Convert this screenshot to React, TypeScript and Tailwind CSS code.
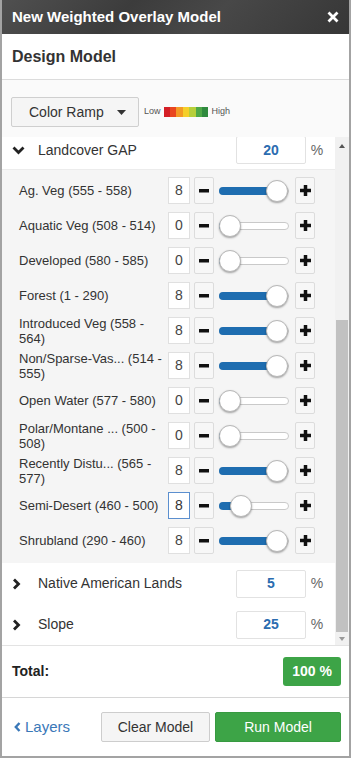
import { useState } from 'react';

type Item = {
  label: string;
  value: number;
  pos: number;
  focused?: boolean;
};

const items: Item[] = [
  { label: 'Ag. Veg (555 - 558)', value: 8, pos: 47 },
  { label: 'Aquatic Veg (508 - 514)', value: 0, pos: 0 },
  { label: 'Developed (580 - 585)', value: 0, pos: 0 },
  { label: 'Forest (1 - 290)', value: 8, pos: 47 },
  { label: 'Introduced Veg (558 - 564)', value: 8, pos: 47 },
  { label: 'Non/Sparse-Vas... (514 - 555)', value: 8, pos: 47 },
  { label: 'Open Water (577 - 580)', value: 0, pos: 0 },
  { label: 'Polar/Montane ... (500 - 508)', value: 0, pos: 0 },
  { label: 'Recently Distu... (565 - 577)', value: 8, pos: 47 },
  { label: 'Semi-Desert (460 - 500)', value: 8, pos: 11, focused: true },
  { label: 'Shrubland (290 - 460)', value: 8, pos: 47 },
];

const ramp = ['#d41f26', '#e9461f', '#f39a25', '#f5cf2a', '#b7cf3a', '#4ea847', '#2f8a3e'];

function MinusIcon() {
  return (
    <svg width="10" height="4" viewBox="0 0 10 4">
      <rect x="0" y="0" width="10" height="3.5" fill="#111" />
    </svg>
  );
}

function PlusIcon() {
  return (
    <svg width="11" height="11" viewBox="0 0 11 11">
      <rect x="0" y="3.75" width="11" height="3.5" fill="#111" />
      <rect x="3.75" y="0" width="3.5" height="11" fill="#111" />
    </svg>
  );
}

function StepButton({ children }: { children: React.ReactNode }) {
  return (
    <button className="w-[20px] h-[27px] flex items-center justify-center bg-[#f7f7f7] border border-[#dcdcdc] rounded-[2px]">
      {children}
    </button>
  );
}

function Slider({ pos }: { pos: number }) {
  return (
    <div className="relative w-[70px] h-[22px]">
      <div className="absolute left-0 right-0 top-[7px] h-[8px] rounded-full bg-white border border-[#c9c9c9]" />
      <div
        className="absolute left-0 top-[7px] h-[8px] rounded-l-full bg-[#1e6db0]"
        style={{ width: pos + 6 }}
      />
      <div
        className="absolute top-0 w-[22px] h-[22px] rounded-full bg-white border border-[#b8b8b8] shadow-[0_1px_2px_rgba(0,0,0,0.35)]"
        style={{ left: pos }}
      />
    </div>
  );
}

function SubRow({ item }: { item: Item }) {
  return (
    <div className="h-[35px] flex items-center pl-[17px]">
      <div className="w-[149px] pr-[6px] text-[13px] leading-[15px] text-[#333]">{item.label}</div>
      <div
        className={
          item.focused
            ? 'w-[22px] h-[27px] flex items-center justify-center bg-white border border-[#5b8fcf] text-[14px] text-[#333]'
            : 'w-[22px] h-[27px] flex items-center justify-center bg-white border border-[#e0e0e0] text-[14px] text-[#444]'
        }
      >
        {item.value}
      </div>
      <div className="ml-[4px]">
        <StepButton>
          <MinusIcon />
        </StepButton>
      </div>
      <div className="ml-[5px]">
        <Slider pos={item.pos} />
      </div>
      <div className="ml-[6px]">
        <StepButton>
          <PlusIcon />
        </StepButton>
      </div>
    </div>
  );
}

function GroupRow({
  label,
  value,
  open,
  height,
}: {
  label: string;
  value: string;
  open?: boolean;
  height: string;
}) {
  return (
    <div className={`${height} flex items-center pl-[10px] pr-[7px] bg-white`}>
      <div className="w-[26px] flex items-center">
        {open ? (
          <svg width="13" height="9" viewBox="0 0 13 9">
            <polyline points="1.5,1.5 6.5,6.5 11.5,1.5" fill="none" stroke="#222" strokeWidth="2.8" />
          </svg>
        ) : (
          <svg width="9" height="12" viewBox="0 0 9 12">
            <polyline points="2,1.5 6.5,6 2,10.5" fill="none" stroke="#222" strokeWidth="2.8" />
          </svg>
        )}
      </div>
      <div className="text-[14px] text-[#333]">{label}</div>
      <div className="ml-auto w-[70px] h-[28px] flex items-center justify-center bg-white border border-[#e2e2e2] rounded-[2px] text-[14px] font-bold text-[#2b6cb0]">
        {value}
      </div>
      <div className="w-[22px] text-center text-[14px] text-[#666]">%</div>
    </div>
  );
}

export default function App() {
  const [rampOpen] = useState(false);
  return (
    <div className="w-[351px] h-[758px] flex flex-col border-x-2 border-b-2 border-[#a3a3a3] bg-white font-['Liberation_Sans',Arial,sans-serif] overflow-hidden">
      {/* title bar */}
      <div className="h-[34px] shrink-0 -mx-[2px] flex items-center justify-between px-[12px] bg-[linear-gradient(135deg,#505050_0%,#3c3c3c_35%,#484848_60%,#363636_100%)]">
        <span className="text-[15px] font-bold text-white">New Weighted Overlay Model</span>
        <svg width="12" height="12" viewBox="0 0 12 12">
          <path d="M1.5 1.5 L10.5 10.5 M10.5 1.5 L1.5 10.5" stroke="#fff" strokeWidth="2.8" />
        </svg>
      </div>

      {/* heading */}
      <div className="h-[46px] shrink-0 flex items-center px-[10px] border-b border-[#dcdcdc] bg-white">
        <span className="text-[16px] font-bold text-[#333]">Design Model</span>
      </div>

      {/* tools */}
      <div className="h-[57px] shrink-0 pt-[17px] px-[9px] bg-[#fafafa]">
        <div className="flex items-center">
          <button className="w-[128px] h-[30px] flex items-center justify-between pl-[17px] pr-[12px] bg-[#f5f5f5] border border-[#cfcfcf] rounded-[2px] text-[14px] text-[#333]">
            Color Ramp
            <svg width="9" height="5" viewBox="0 0 9 5" className={rampOpen ? 'rotate-180' : ''}>
              <polygon points="0,0 9,0 4.5,5" fill="#333" />
            </svg>
          </button>
          <div className="flex items-center ml-[5px] gap-[3px]">
            <span className="text-[9px] text-[#555]">Low</span>
            <div className="flex h-[10px] w-[45px]">
              {ramp.map((c) => (
                <div key={c} className="flex-1" style={{ background: c }} />
              ))}
            </div>
            <span className="text-[9px] text-[#555]">High</span>
          </div>
        </div>
      </div>

      {/* scroll panel */}
      <div className="h-[508px] shrink-0 flex">
        <div className="flex-1 overflow-hidden">
          <div className="-mt-[6px]">
            <GroupRow label="Landcover GAP" value="20" open height="h-[39px] border-b border-[#ececec]" />
            <div className="bg-[#f5f5f5] pt-[3px] pb-[5px]">
              {items.map((it) => (
                <SubRow key={it.label} item={it} />
              ))}
            </div>
            <GroupRow label="Native American Lands" value="5" height="h-[41px]" />
            <GroupRow label="Slope" value="25" height="h-[41px]" />
          </div>
        </div>
        <div className="w-[14px] flex flex-col bg-[#f1f1f1]">
          <div className="h-[17px] flex items-center justify-center">
            <svg width="6" height="4" viewBox="0 0 6 4">
              <polygon points="0,4 6,4 3,0" fill="#555" />
            </svg>
          </div>
          <div className="flex-1 flex flex-col px-[1px]">
            <div className="mt-[166px] h-[312px] bg-[#c1c1c1]" />
          </div>
          <div className="h-[13px] flex items-center justify-center">
            <svg width="6" height="4" viewBox="0 0 6 4">
              <polygon points="0,0 6,0 3,4" fill="#999" />
            </svg>
          </div>
        </div>
      </div>

      {/* total */}
      <div className="h-[52px] shrink-0 flex items-center justify-between pl-[10px] pr-[8px] border-t border-[#e3e3e3] bg-white">
        <span className="text-[14px] font-bold text-[#222]">Total:</span>
        <div className="w-[58px] h-[29px] flex items-center justify-center rounded-[3px] bg-[#3da447] text-[14px] font-bold text-white">
          100 %
        </div>
      </div>

      {/* footer */}
      <div className="h-[59px] shrink-0 flex items-center pl-[12px] pr-[8px] border-t border-[#d6d6d6] bg-white">
        <a className="flex items-center gap-[4px] text-[15px] text-[#3a78b8]">
          <svg width="7" height="10" viewBox="0 0 7 10">
            <polyline points="5.5,1 1.8,5 5.5,9" fill="none" stroke="#3a78b8" strokeWidth="2.4" />
          </svg>
          Layers
        </a>
        <button className="ml-auto w-[109px] h-[30px] bg-[#f5f5f5] border border-[#cdcdcd] rounded-[2px] text-[14px] text-[#333]">
          Clear Model
        </button>
        <button className="ml-[5px] w-[126px] h-[30px] bg-[#3da447] border border-[#379a41] rounded-[2px] text-[14px] text-white">
          Run Model
        </button>
      </div>
    </div>
  );
}
